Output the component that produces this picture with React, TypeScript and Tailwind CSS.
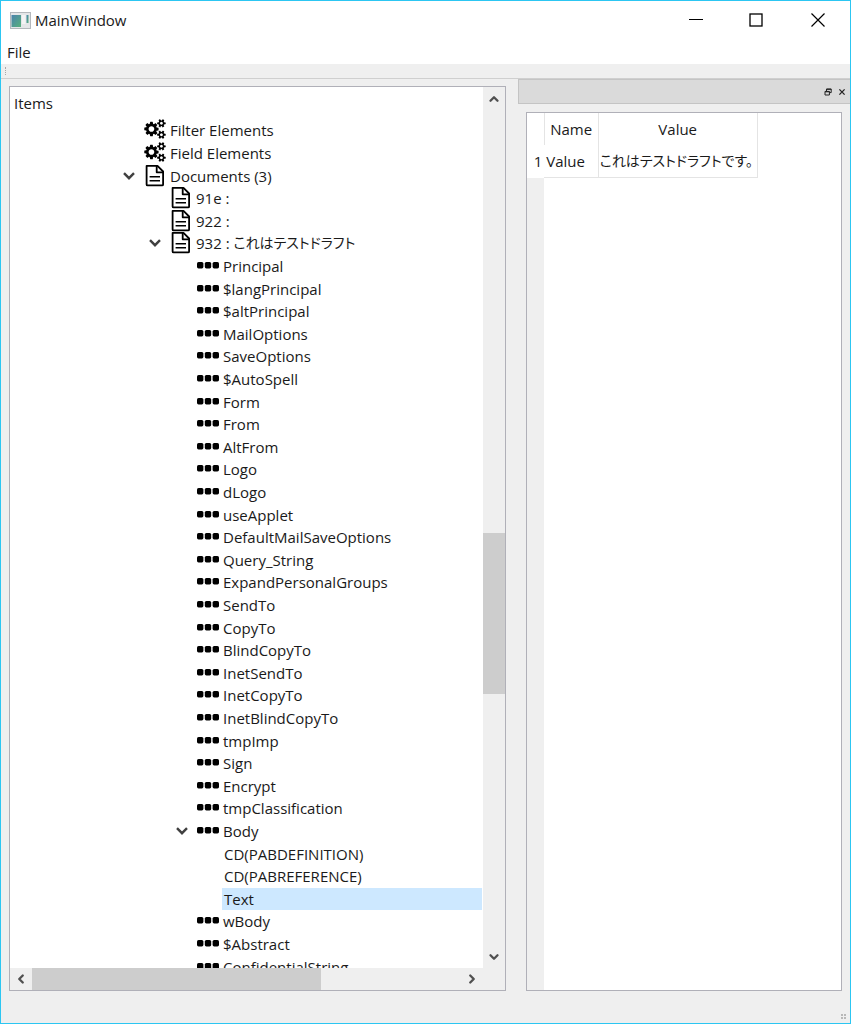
import { useState } from "react";
import { ChevronDown, ChevronLeft, ChevronRight, ChevronUp } from "lucide-react";

type IconKind = "cogs" | "doc" | "dots";

interface TreeRow {
  label: string;
  japanese?: string;
  level: number;
  icon?: IconKind;
  open?: boolean;
}

const field = (label: string): TreeRow => ({ label, level: 2, icon: "dots" });

const rows: TreeRow[] = [
  { label: "Filter Elements", level: 0, icon: "cogs" },
  { label: "Field Elements", level: 0, icon: "cogs" },
  { label: "Documents (3)", level: 0, icon: "doc", open: true },
  { label: "91e :", level: 1, icon: "doc" },
  { label: "922 :", level: 1, icon: "doc" },
  { label: "932 : ", japanese: "これはテストドラフト", level: 1, icon: "doc", open: true },
  field("Principal"),
  field("$langPrincipal"),
  field("$altPrincipal"),
  field("MailOptions"),
  field("SaveOptions"),
  field("$AutoSpell"),
  field("Form"),
  field("From"),
  field("AltFrom"),
  field("Logo"),
  field("dLogo"),
  field("useApplet"),
  field("DefaultMailSaveOptions"),
  field("Query_String"),
  field("ExpandPersonalGroups"),
  field("SendTo"),
  field("CopyTo"),
  field("BlindCopyTo"),
  field("InetSendTo"),
  field("InetCopyTo"),
  field("InetBlindCopyTo"),
  field("tmpImp"),
  field("Sign"),
  field("Encrypt"),
  field("tmpClassification"),
  { label: "Body", level: 2, icon: "dots", open: true },
  { label: "CD(PABDEFINITION)", level: 3 },
  { label: "CD(PABREFERENCE)", level: 3 },
  { label: "Text", level: 3 },
  field("wBody"),
  field("$Abstract"),
  field("ConfidentialString"),
];

const indents = ["pl-[111px]", "pl-[137px]", "pl-[164px]", "pl-[189px]"];

const SMALL_COG =
  "v140q0 16-149 31-12 27-30 52 51 113 51 138 0 4-4 7-122 71-124 71-8 0-46-47t-52-68q-20 2-30 2t-30-2q-14 21-52 68t-46 47q-2 0-124-71-4-3-4-7 0-25 51-138-18-25-30-52-149-15-149-31v-140q0-16 149-31 13-29 30-52-51-113-51-138 0-4 4-7 4-2 35-20t59-34 30-16q8 0 46 46.5t52 67.5q20-2 30-2t30 2q51-71 92-112l6-2q4 0 124 70 4 3 4 7 0 25-51 138 17 23 30 52 149 15 149 31z";

const COGS =
  "M896 896q0-106-75-181t-181-75-181 75-75 181 75 181 181 75 181-75 75-181zm768 512q0-52-38-90t-90-38-90 38-38 90q0 53 37.5 90.5t90.5 37.5 90.5-37.5 37.5-90.5zm0-1024q0-52-38-90t-90-38-90 38-38 90q0 53 37.5 90.5t90.5 37.5 90.5-37.5 37.5-90.5zm-384 421v185q0 10-7 19.5t-16 10.5l-155 24q-11 35-32 76 34 48 90 115 7 11 7 20 0 12-7 19-23 30-82.5 89.5t-78.5 59.5q-11 0-21-7l-115-90q-37 19-77 31-11 108-23 155-7 24-30 24h-186q-11 0-20-7.5t-10-17.5l-23-153q-34-10-75-31l-118 89q-7 7-20 7-11 0-21-8-144-133-144-160 0-9 7-19 10-14 41-53t47-61q-23-44-35-82l-152-24q-10-1-17-9.5t-7-19.5v-185q0-10 7-19.5t16-10.5l155-24q11-35 32-76-34-48-90-115-7-11-7-20 0-12 7-20 22-30 82-89t79-59q11 0 21 7l115 90q34-18 77-32 11-108 23-154 7-24 30-24h186q11 0 20 7.5t10 17.5l23 153q34 10 75 31l118-89q8-7 20-7 11 0 21 8 144 133 144 160 0 8-7 19-12 16-42 54t-45 60q23 48 34 82l152 23q10 2 17 10.5t7 19.5zm640 533" +
  SMALL_COG +
  "m0-1024" +
  SMALL_COG;

function RowIcon({ kind }: { kind: IconKind }) {
  if (kind === "cogs") {
    return (
      <svg viewBox="0 0 1920 1792" className="w-[22px] h-[22px] pb-[2px]">
        <path d={COGS} fill="black" />
      </svg>
    );
  }
  if (kind === "doc") {
    return (
      <svg viewBox="0 0 22 22" className="w-[22px] h-[22px]" fill="none" stroke="black" strokeWidth="1.8" strokeLinejoin="round">
        <path d="M2.6 0.9h10.9l5.6 5.6v12.9a1 1 0 0 1-1 1H3.6a1 1 0 0 1-1-1z" />
        <path d="M12.7 0.9v6.4h6.4" />
        <path d="M5.6 11.8h10.4M5.6 15.8h10.4" strokeWidth="1.6" />
      </svg>
    );
  }
  return (
    <svg viewBox="0 0 22 22" className="w-[22px] h-[22px]" fill="black">
      <rect x="0" y="7" width="6.4" height="6.4" rx="1.6" />
      <rect x="7.8" y="7" width="6.4" height="6.4" rx="1.6" />
      <rect x="15.6" y="7" width="6.4" height="6.4" rx="1.6" />
    </svg>
  );
}

function Japanese({ children }: { children: string }) {
  return <span lang="ja" className="text-[14px] [font-feature-settings:'palt']">{children}</span>;
}

function TitleBar() {
  return (
    <header className="flex items-center h-[38px] pl-[9px] bg-white shrink-0">
      <svg viewBox="0 0 21 17" className="w-[21px] h-[17px]">
        <defs>
          <linearGradient id="appIcon" x1="0" y1="0" x2="1" y2="1">
            <stop offset="0" stopColor="#4a83ad" />
            <stop offset="1" stopColor="#58b07c" />
          </linearGradient>
        </defs>
        <rect x="0.5" y="0.5" width="20" height="16" fill="#e4e6e8" stroke="#b4b8bc" />
        <rect x="1.5" y="3" width="9.5" height="12" fill="url(#appIcon)" />
        <rect x="12" y="3" width="3.5" height="9" fill="#f4f4f4" />
        <rect x="16.5" y="3" width="2" height="8" fill="url(#appIcon)" />
      </svg>
      <h1 className="ml-1 text-[15px]">MainWindow</h1>
      <div className="ml-auto flex h-full">
        <button aria-label="Minimize" className="w-[60px] flex items-center justify-center">
          <svg viewBox="0 0 14 14" className="w-[14px] h-[14px]" stroke="black" fill="none">
            <path d="M0 6.5h14" />
          </svg>
        </button>
        <button aria-label="Maximize" className="w-[60px] flex items-center justify-center">
          <svg viewBox="0 0 14 14" className="w-[14px] h-[14px]" stroke="black" fill="none">
            <rect x="1" y="1" width="12" height="12" strokeWidth="1.3" />
          </svg>
        </button>
        <button aria-label="Close" className="w-[64px] flex items-center justify-center">
          <svg viewBox="0 0 14 14" className="w-[14px] h-[14px]" stroke="black" fill="none">
            <path d="M0.5 0.5l13 13M13.5 0.5l-13 13" strokeWidth="1.2" />
          </svg>
        </button>
      </div>
    </header>
  );
}

function ItemTree() {
  const [selected, setSelected] = useState("Text");

  return (
    <section className="flex-[497] min-w-0 mt-[7px] flex flex-col border border-[#b0b0b8] bg-white">
      <div className="flex flex-1 min-h-0">
        <div className="flex-1 min-w-0 flex flex-col pr-px">
          <h2 className="h-8 pl-1 flex items-center shrink-0 text-[15px]">Items</h2>
          <div className="flex-1 min-h-0 overflow-hidden">
            <ul role="tree" aria-label="Items" className="grid auto-rows-fr h-[859px]">
              {rows.map((row) => (
                <li
                  key={row.label}
                  role="treeitem"
                  aria-level={row.level + 1}
                  aria-selected={row.label === selected}
                  onClick={() => setSelected(row.label)}
                  className={`flex items-center min-h-0 ${indents[row.level]}`}
                >
                  <span className="w-[23px] shrink-0">
                    {row.open && (
                      <button aria-label={`Collapse ${row.label}`} className="w-4 flex justify-center">
                        <svg viewBox="0 0 12 8" className="w-3 h-2" fill="none" stroke="#404040" strokeWidth="2.4">
                          <path d="M1 1.2l5 5 5-5" />
                        </svg>
                      </button>
                    )}
                  </span>
                  {row.icon && <RowIcon kind={row.icon} />}
                  <span
                    className={`flex-1 h-full flex items-center whitespace-pre ${row.icon ? "pl-1" : "pl-[2px]"} ${
                      row.label === selected ? "bg-[#cde8ff]" : ""
                    }`}
                  >
                    {row.label}
                    {row.japanese && <Japanese>{row.japanese}</Japanese>}
                  </span>
                </li>
              ))}
            </ul>
          </div>
        </div>
        <div className="w-[22px] shrink-0 flex flex-col bg-[#efefef] text-[#505050]">
          <button aria-label="Scroll up" className="h-[23px] flex items-center justify-center">
            <ChevronUp size={14} strokeWidth={4} />
          </button>
          <div className="flex-[423]" />
          <div className="flex-[162] bg-[#cdcdcd]" />
          <div className="flex-[251]" />
          <button aria-label="Scroll down" className="h-[23px] flex items-center justify-center">
            <ChevronDown size={14} strokeWidth={4} />
          </button>
        </div>
      </div>
      <div className="h-[22px] shrink-0 flex pr-[22px] bg-[#efefef] text-[#505050]">
        <button aria-label="Scroll left" className="w-[22px] flex items-center justify-center">
          <ChevronLeft size={14} strokeWidth={4} />
        </button>
        <div className="flex-[289] bg-[#cdcdcd]" />
        <div className="flex-[140]" />
        <button aria-label="Scroll right" className="w-[22px] flex items-center justify-center">
          <ChevronRight size={14} strokeWidth={4} />
        </button>
      </div>
    </section>
  );
}

function ValueDock() {
  return (
    <aside className="flex-[333] min-w-0 flex flex-col">
      <div className="h-[25px] shrink-0 flex items-center justify-end gap-1 pr-[3px] border border-r-0 border-[#c4c4c4] bg-[#dadada]">
        <button aria-label="Float" className="w-[10px] h-[10px] flex items-center justify-center">
          <svg viewBox="0 0 8 8" className="w-2 h-2" fill="none" stroke="#222">
            <path d="M2.5 3V1h4.7v3.6H5.6M2.5 1.3h4.7" />
            <path d="M1 3.4h4.4v3.6H1zM1 3.8h4.4" />
          </svg>
        </button>
        <button aria-label="Close dock" className="w-[10px] h-[10px] flex items-center justify-center">
          <svg viewBox="0 0 8 8" className="w-2 h-2" fill="none" stroke="#222" strokeWidth="1.3">
            <path d="M1.4 1.4l5.2 5.2M6.6 1.4L1.4 6.6" />
          </svg>
        </button>
      </div>
      <div className="flex-1 mt-2 mx-2 flex flex-col border border-[#b0b0b8] bg-white">
        <table className="self-start table-fixed w-[230px] border-collapse">
          <colgroup>
            <col className="w-[17px]" />
            <col className="w-[54px]" />
            <col className="w-[159px]" />
          </colgroup>
          <thead>
            <tr className="h-8">
              <td className="border-r border-[#e4e4e4]" />
              <th scope="col" className="font-normal border-r border-[#e4e4e4]">Name</th>
              <th scope="col" className="font-normal border-r border-[#e4e4e4]">Value</th>
            </tr>
          </thead>
          <tbody>
            <tr className="h-8">
              <th scope="row" className="font-normal text-right pr-[2px]">1</th>
              <td className="pl-[2px] border-r border-b border-[#e4e4e4]">Value</td>
              <td className="pl-px border-r border-b border-[#e4e4e4] whitespace-nowrap">
                <Japanese>これはテストドラフトです。</Japanese>
              </td>
            </tr>
          </tbody>
        </table>
        <div className="flex-1 w-[17px] bg-[#efefef]" />
      </div>
    </aside>
  );
}

export default function App() {
  return (
    <div className="h-screen flex flex-col border border-[#2cc6f2] bg-[#efefef] text-[15px] leading-5 text-[#1a1a1a] font-['Open_Sans','Noto_Sans_CJK_JP',sans-serif]">
      <TitleBar />
      <nav className="h-[25px] shrink-0 flex items-center pl-[6px] bg-white">
        <button>File</button>
      </nav>
      <div className="h-[15px] shrink-0 flex items-center pl-1 border-b border-[#cfcfcf]">
        <div className="h-2 border-l border-dotted border-[#a8a8a8]" />
      </div>
      <main className="flex-1 min-h-0 flex gap-3 pl-2">
        <ItemTree />
        <ValueDock />
      </main>
      <footer className="h-8 shrink-0 flex items-end justify-end p-[3px]">
        <svg viewBox="0 0 6 6" className="w-[6px] h-[6px]" fill="#b8b8b8">
          <path d="M0 0h2v2H0zM3 0h2v2H3zM0 3h2v2H0zM3 3h2v2H3z" />
        </svg>
      </footer>
    </div>
  );
}
